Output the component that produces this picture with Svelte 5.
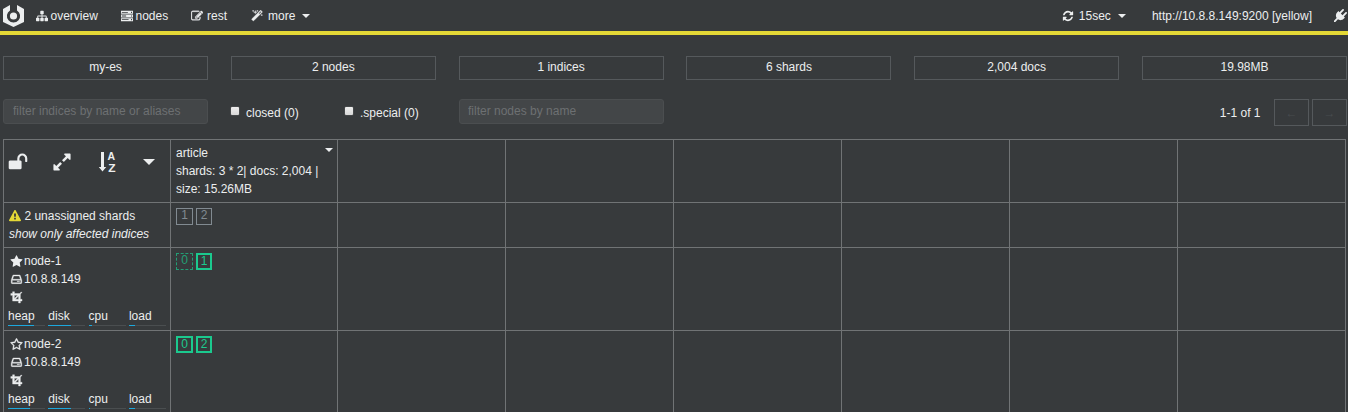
<script>
  const icons = {
    sitemap: 'M1792 1248v320q0 40-28 68t-68 28h-320q-40 0-68-28t-28-68v-320q0-40 28-68t68-28h96v-192h-512v192h96q40 0 68 28t28 68v320q0 40-28 68t-68 28h-320q-40 0-68-28t-28-68v-320q0-40 28-68t68-28h96v-192h-512v192h96q40 0 68 28t28 68v320q0 40-28 68t-68 28h-320q-40 0-68-28t-28-68v-320q0-40 28-68t68-28h96v-192q0-52 38-90t90-38h512v-192h-96q-40 0-68-28t-28-68v-320q0-40 28-68t68-28h320q40 0 68 28t28 68v320q0 40-28 68t-68 28h-96v192h512q52 0 90 38t38 90v192h96q40 0 68 28t28 68z',
    server: 'M0 128h1792v448H0zM128 290v120h900v-120zM1500 260v180h150v-180zM0 672h1792v448H0zM128 834v120h640v-120zM1500 804v180h150v-180zM0 1216h1792v448H0zM128 1378v120h1000v-120zM1500 1348v180h150v-180z',
    edit: 'M888 1184l116-116-152-152-116 116v56h96v96h56zm440-720q-16-16-33 1l-350 350q-17 17-1 33t33-1l350-350q17-17 1-33zm80 594v190q0 119-84.5 203.5t-203.5 84.5h-832q-119 0-203.5-84.5t-84.5-203.5v-832q0-119 84.5-203.5t203.5-84.5h832q63 0 117 25 15 7 18 23 3 17-9 29l-49 49q-14 14-32 8-23-6-45-6h-832q-66 0-113 47t-47 113v832q0 66 47 113t113 47h832q66 0 113-47t47-113v-126q0-13 9-22l64-64q15-15 35-7t20 29zm-96-738l288 288-672 672h-288v-288zm444 132l-92 92-288-288 92-92q28-28 68-28t68 28l152 152q28 28 28 68t-28 68z',
    magic: 'M1254 581l293-293-107-107-293 293zm447-293q0 27-18 45l-1286 1286q-18 18-45 18t-45-18l-198-198q-18-18-18-45t18-45l1286-1286q18-18 45-18t45 18l198 198q18 18 18 45zm-1351-190l98 30-98 30-30 98-30-98-98-30 98-30 30-98zm350 162l196 60-196 60-60 196-60-196-196-60 196-60 60-196zm930 478l98 30-98 30-30 98-30-98-98-30 98-30 30-98zm-640-640l98 30-98 30-30 98-30-98-98-30 98-30 30-98z',
    refresh: 'M1639 1056q0 5-1 7-64 268-268 434.5t-478 166.5q-146 0-282.5-55t-243.5-157l-129 129q-19 19-45 19t-45-19-19-45v-448q0-26 19-45t45-19h448q26 0 45 19t19 45-19 45l-137 137q71 66 161 102t187 36q134 0 250-65t186-179q11-17 53-117 8-23 30-23h192q13 0 22.5 9.5t9.5 22.5zm25-800v448q0 26-19 45t-45 19h-448q-26 0-45-19t-19-45 19-45l138-138q-148-137-349-137-134 0-250 65t-186 179q-11 17-53 117-8 23-30 23h-199q-13 0-22.5-9.5t-9.5-22.5v-7q65-268 270-434.5t480-166.5q146 0 284 55.5t245 156.5l130-129q19-19 45-19t45 19 19 45z',
    plug: 'M1755 453q37 38 37 90.500t-37 90.500l-401 400 150 150-160 160q-163 163-389.500 186.500t-411.500-100.500l-362 362h-181v-181l362-362q-124-185-100.500-411.500t186.500-389.500l160-160 150 150 400-401q38-37 91-37t90 37 37 90.500-37 90.500l-400 401 234 234 401-400q38-37 91-37t90 37z',
    star: 'M1728 647q0 22-26 48l-363 354 86 500q1 7 1 20 0 21-10.5 35.5t-30.5 14.5q-19 0-40-12l-449-236-449 236q-22 12-40 12-21 0-31.5-14.5t-10.5-35.5q0-6 2-20l86-500-364-354q-25-27-25-48 0-37 56-46l502-73 225-455q19-41 49-41t49 41l225 455 502 73q56 9 56 46z',
    starOutline: 'M1201 1004l306-297-422-62-189-382-189 382-422 62 306 297-73 421 378-199 377 199zm527-357q0 22-26 48l-363 354 86 500q1 7 1 20 0 50-41 50-19 0-40-12l-449-236-449 236q-22 12-40 12-21 0-31.5-14.5t-10.5-35.5q0-6 2-20l86-500-364-354q-25-27-25-48 0-37 56-46l502-73 225-455q19-41 49-41t49 41l225 455 502 73q56 9 56 46z',
    warning: 'M1024 1375v-190q0-14-9.5-23.5t-22.5-9.5h-192q-13 0-22.5 9.5t-9.5 23.5v190q0 14 9.5 23.5t22.5 9.5h192q13 0 22.5-9.5t9.5-23.5zm-2-374l18-459q0-12-10-19-13-11-24-11h-220q-11 0-24 11-10 7-10 21l17 457q0 10 10 16.5t24 6.5h185q14 0 23.5-6.5t10.5-16.5zm-14-934l768 1408q35 63-2 126-17 29-46.5 46t-63.5 17h-1536q-34 0-63.5-17t-46.5-46q-37-63-2-126l768-1408q17-31 47-49t65-18 65 18 47 49z',
    unlock: 'M1728 576v256q0 26-19 45t-45 19h-64q-26 0-45-19t-19-45v-256q0-106-75-181t-181-75-181 75-75 181v192h96q40 0 68 28t28 68v576q0 40-28 68t-68 28h-960q-40 0-68-28t-28-68v-576q0-40 28-68t68-28h672v-192q0-185 131.5-316.5t316.5-131.5 316.5 131.5 131.5 316.5z',
    expand: 'M883 1056q0 13-10 23l-332 332 144 144q19 19 19 45t-19 45-45 19h-448q-26 0-45-19t-19-45v-448q0-26 19-45t45-19 45 19l144 144 332-332q10-10 23-10t23 10l114 114q10 10 10 23zm781-864v448q0 26-19 45t-45 19-45-19l-144-144-332 332q-10 10-23 10t-23-10l-114-114q-10-10-10-23t10-23l332-332-144-144q-19-19-19-45t19-45 45-19h448q26 0 45 19t19 45z',
    disk: 'M480 276h832q80 0 106 80l182 530q24 60 24 110v360q0 110-110 110H278q-110 0-110-110V996q0-50 24-110l182-530q26-80 106-80zM510 414L356 862h1080L1282 414zM306 1000v328h1180v-328zM980 1110h340v70H980z',
    crop: 'M360 100h250v250h720l230-230 90 90-220 220v710h230v250h-230v260h-250v-260H360V600H110V350h250zM610 600v440l440-440zM740 1140h440V700z',
  };

  const nav = [
    { icon: 'sitemap', label: 'overview', cls: 'overview' },
    { icon: 'server', label: 'nodes', cls: 'nodes' },
    { icon: 'edit', label: 'rest', cls: 'rest' },
  ];
  const stats = ['my-es', '2 nodes', '1 indices', '6 shards', '2,004 docs', '19.98MB'];
  const empty = [1, 2, 3, 4, 5, 6];
  const nodes = [
    {
      name: 'node-1', master: true,
      metrics: [['heap', 70], ['disk', 62], ['cpu', 8], ['load', 16]],
      shards: [{ id: 0, kind: 'replica' }, { id: 1, kind: 'primary' }],
    },
    {
      name: 'node-2', master: false,
      metrics: [['heap', 59], ['disk', 62], ['cpu', 5], ['load', 16]],
      shards: [{ id: 0, kind: 'primary' }, { id: 2, kind: 'primary' }],
    },
  ];
</script>

{#snippet icon(name, size = 12)}
  <svg class="icon {name}" width={size} height={size} viewBox="0 0 1792 1792"><path fill-rule={['server', 'disk', 'crop'].includes(name) ? 'evenodd' : 'nonzero'} d={icons[name]} /></svg>
{/snippet}

<div class="app">
  <header>
    <svg class="logo" width="21" height="22" viewBox="0 0 21 22">
      <path d="M7 0L0 4V17L10.500 22 21 17V4L14 0V5.400A6.600 6.600 0 1 1 7 5.400Z" />
      <circle cx="10.500" cy="11" r="3.600" />
    </svg>
    {#each nav as item}
      <a class="link-{item.cls}">{@render icon(item.icon)}<span>{item.label}</span></a>
    {/each}
    <a class="link-more">{@render icon('magic')}<span>more</span><i class="caret"></i></a>
    <a class="link-interval">{@render icon('refresh')}<span>15sec</span><i class="caret"></i></a>
    <a class="link-host">http://10.8.8.149:9200 [yellow]</a>
    <a class="link-plug">{@render icon('plug', 13)}</a>
  </header>

  <section class="stats">
    {#each stats as stat}<div>{stat}</div>{/each}
  </section>

  <section class="filters">
    <input class="names" placeholder="filter indices by name or aliases" />
    <label class="closed"><i class="box"></i>closed (0)</label>
    <label class="special"><i class="box"></i>.special (0)</label>
    <input class="names by-node" placeholder="filter nodes by name" />
    <span class="range">1-1 of 1</span>
    <button>←</button>
    <button>→</button>
  </section>

  <main>
    <div class="row head">
      <div class="cell tools">
        {@render icon('unlock', 20)}
        {@render icon('expand', 20)}
        <svg class="sort" width="20" height="24" viewBox="0 0 20 24">
          <path d="M3 1h3v15h2.200L4.500 20.600 0.800 16H3z" />
          <text transform="translate(9.600 9.400) scale(1.050 1.150)">A</text>
          <text transform="translate(10.200 21) scale(1.200 1.150)">Z</text>
        </svg>
        <i class="caret big"></i>
      </div>
      <div class="cell index">
        <div class="title"><span>article</span><i class="caret"></i></div>
        <div>shards: 3 * 2| docs: 2,004 |</div>
        <div>size: 15.26MB</div>
      </div>
      {#each empty as _}<div class="cell"></div>{/each}
    </div>
    <div class="row unassigned">
      <div class="cell">
        <div class="alert">{@render icon('warning', 12)}<span>2 unassigned shards</span></div>
        <em>show only affected indices</em>
      </div>
      <div class="cell shards"><b class="lost">1</b><b class="lost">2</b></div>
      {#each empty as _}<div class="cell"></div>{/each}
    </div>
    {#each nodes as node}
      <div class="row node">
        <div class="cell">
          <div class="line">{@render icon(node.master ? 'star' : 'starOutline', 13)}<span>{node.name}</span></div>
          <div class="line">{@render icon('disk', 13)}<span>10.8.8.149</span></div>
          <div class="line">{@render icon('crop', 13)}</div>
          <div class="metrics">
            {#each node.metrics as [label, value]}
              <div><span>{label}</span><div class="bar"><div style="width: {value}%"></div></div></div>
            {/each}
          </div>
        </div>
        <div class="cell shards">
          {#each node.shards as shard}<b class={shard.kind}>{shard.id}</b>{/each}
        </div>
        {#each empty as _}<div class="cell"></div>{/each}
      </div>
    {/each}
  </main>
</div>

<style>
  :global(body) { background: #373a3c; }
  .app {
    width: 1348px;
    height: 412px;
    overflow: hidden;
    background: #373a3c;
    color: #eceeef;
    font: 12px/18px "Liberation Sans", Arial, sans-serif;
  }
  .app * { box-sizing: border-box; }
  .icon, .logo, .sort { fill: currentColor; flex: none; display: block; }
  .edit, .magic, .starOutline, .crop, .disk { stroke: currentColor; stroke-width: 50; }
  header {
    display: flex;
    align-items: center;
    height: 35px;
    padding: 0 0 0 3px;
    border-bottom: 4px solid #e4d836;
    white-space: nowrap;
  }
  header a { display: flex; align-items: center; }
  .link-overview { margin-left: 11.500px; gap: 3px; width: 85px; }
  .link-nodes { gap: 3px; width: 70.500px; }
  .link-rest { gap: 4px; width: 60px; }
  .link-more { gap: 5px; }
  .link-interval { margin-left: auto; gap: 5px; }
  .link-host { margin-left: 26px; }
  .link-plug { margin-left: 22px; width: 14px; }
  .caret {
    border: 4px solid transparent;
    border-top-color: currentColor;
    border-bottom: 0;
    margin-left: 2px;
  }
  .stats {
    display: grid;
    grid-template-columns: repeat(6, 205px);
    justify-content: space-between;
    margin: 21px 1px 0 3px;
  }
  .stats div { height: 24px; line-height: 20px; border: 1px solid #55595c; text-align: center; }
  .filters { display: flex; margin: 19px 1px 0 3px; height: 27px; }
  .names {
    width: 205px;
    height: 25px;
    padding: 0 9px 1px;
    margin: 0;
    background: #434648;
    border: 1px solid #4b4e50;
    border-radius: 3px;
    font: inherit;
    color: inherit;
  }
  .by-node { padding-left: 8px; }
  .names::placeholder { color: #6d7072; opacity: 1; }
  label { display: flex; padding: 5px 0 0 23px; gap: 7px; }
  .closed { width: 137px; }
  .special { width: 114px; padding-left: 0; }
  .box { width: 8px; height: 8px; margin-top: 3px; border-radius: 1px; background: linear-gradient(#eee, #d8d8d8); box-shadow: 0 0 1px #ccc; }
  .range { margin: 5px 13.500px 0 auto; }
  button {
    width: 35px;
    height: 27px;
    padding: 0;
    background: none;
    border: 1px solid #55595c;
    color: #484c4f;
    font: inherit;
  }
  button + button { margin-left: 3px; }
  main { width: 1343px; margin: 13px 0 0 3px; border-right: 1px solid #707375; }
  .row { display: grid; grid-template-columns: 167px 167px repeat(6, 168px); border-top: 1px solid #707375; }
  .cell { border-left: 1px solid #707375; padding: 4px 5px; }
  .head { height: 63px; }
  .unassigned { height: 45px; }
  .node { height: 83px; }
  .cell.tools { display: flex; padding: 12px 0 0 4px; }
  .tools .expand, .tools :global(.expand) { margin-left: 24px; }
  .tools .sort { margin-left: 26px; margin-top: -1px; }
  .sort text { font: bold 10px "Liberation Sans", sans-serif; }
  .caret.big { border-width: 6px 6px 0; margin: 7px 0 0 25px; height: 6px; }
  .title { display: flex; justify-content: space-between; }
  .title .caret { margin: 4px -1px 0 0; height: 4px; }
  .alert, .line { display: flex; align-items: center; height: 18px; }
  .alert .icon { color: #e4d836; }
  .alert span { margin-left: 3.400px; }
  em { display: block; }
  .line { padding-left: 1px; gap: 1px; }
  .metrics { display: grid; grid-template-columns: repeat(4, 37px); column-gap: 3.300px; margin-left: -1px; }
  .metrics span { display: block; height: 19px; line-height: 20px; }
  .bar { height: 1px; background: #4a4e50; }
  .bar div { height: 1px; background: #1ca8dd; }
  .shards { display: flex; gap: 3px; padding-top: 5px; }
  .shards b { width: 17px; height: 17px; font-weight: normal; line-height: 13px; text-align: center; border: 1px solid; }
  .shards b:last-child { width: 16px; }
  .shards .lost { color: #818a91; }
  .shards .replica { color: #1bc98e; border-style: dashed; opacity: .7; }
  .shards .primary { color: #1bc98e; border-width: 2px; }
</style>
